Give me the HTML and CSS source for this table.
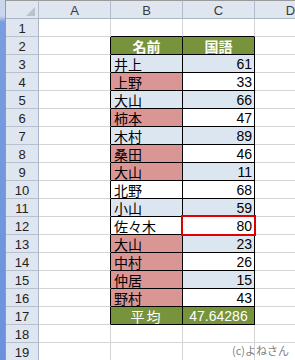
FILE: index.html
```html
<!DOCTYPE html>
<html lang="ja">
<head>
<meta charset="utf-8">
<link rel="stylesheet" href="styles.css">
</head>
<body>
<div class="app">
  <div class="strip"></div>
  <div class="sheet">
    <div class="c ch corner"></div><div class="c ch">A</div><div class="c ch">B</div><div class="c ch">C</div><div class="c ch">D</div>

    <div class="c rh">1</div><div class="c"></div><div class="c tt"></div><div class="c tt"></div><div class="c"></div>
    <div class="c rh">2</div><div class="c tl"></div><div class="c t g hd">名前</div><div class="c t g hd">国語</div><div class="c"></div>
    <div class="c rh">3</div><div class="c tl"></div><div class="c t nm b">井上</div><div class="c t num b">61</div><div class="c"></div>
    <div class="c rh">4</div><div class="c tl"></div><div class="c t nm p">上野</div><div class="c t num">33</div><div class="c"></div>
    <div class="c rh">5</div><div class="c tl"></div><div class="c t nm b">大山</div><div class="c t num b">66</div><div class="c"></div>
    <div class="c rh">6</div><div class="c tl"></div><div class="c t nm p">柿本</div><div class="c t num">47</div><div class="c"></div>
    <div class="c rh">7</div><div class="c tl"></div><div class="c t nm b">木村</div><div class="c t num b">89</div><div class="c"></div>
    <div class="c rh">8</div><div class="c tl"></div><div class="c t nm p">桑田</div><div class="c t num">46</div><div class="c"></div>
    <div class="c rh">9</div><div class="c tl"></div><div class="c t nm p">大山</div><div class="c t num b">11</div><div class="c"></div>
    <div class="c rh">10</div><div class="c tl"></div><div class="c t nm">北野</div><div class="c t num">68</div><div class="c"></div>
    <div class="c rh">11</div><div class="c tl"></div><div class="c t nm b">小山</div><div class="c t num b">59</div><div class="c"></div>
    <div class="c rh">12</div><div class="c tl"></div><div class="c t nm">佐々木</div><div class="c t num sel">80</div><div class="c"></div>
    <div class="c rh">13</div><div class="c tl"></div><div class="c t nm p">大山</div><div class="c t num b">23</div><div class="c"></div>
    <div class="c rh">14</div><div class="c tl"></div><div class="c t nm p">中村</div><div class="c t num">26</div><div class="c"></div>
    <div class="c rh">15</div><div class="c tl"></div><div class="c t nm p">仲居</div><div class="c t num b">15</div><div class="c"></div>
    <div class="c rh">16</div><div class="c tl"></div><div class="c t nm p">野村</div><div class="c t num">43</div><div class="c"></div>
    <div class="c rh">17</div><div class="c tl"></div><div class="c t g avg">平均</div><div class="c t g avgnum">47.64286</div><div class="c"></div>
    <div class="c rh">18</div><div class="c"></div><div class="c"></div><div class="c"></div><div class="c"></div>
    <div class="c rh">19</div><div class="c"></div><div class="c"></div><div class="c"></div><div class="c"></div>
  </div>
  <div class="credit">(c)よねさん</div>
</div>
</body>
</html>
```

FILE: styles.css
```css
html, body {
  margin: 0;
  padding: 0;
  background: #ffffff;
}
body {
  width: 295px;
  height: 360px;
  overflow: hidden;
}
.app {
  position: relative;
  display: flex;
  width: 295px;
  height: 360px;
  overflow: hidden;
}
.strip {
  flex: 0 0 5px;
  border-right: 1px solid #8d9cb4;
  background: linear-gradient(to bottom, #c9d6ec 0, #c9d6ec 16px, #7a9ddf 22px, #6a92dc 100%);
}
.sheet {
  flex: 0 0 auto;
  display: grid;
  grid-template-columns: 33px 72px 72px 72px 72px;
  grid-template-rows: 19px repeat(19, 18px);
  font-family: "Liberation Sans", "Noto Sans CJK JP", sans-serif;
  font-size: 13px;
  line-height: 15px;
  color: #000;
}
.c {
  box-sizing: border-box;
  border-right: 1px solid #d5d5d5;
  border-bottom: 1px solid #d5d5d5;
  display: flex;
  align-items: center;
  min-width: 0;
  overflow: visible;
  white-space: nowrap;
}
.ch {
  background: #dfe6ef;
  border-top: 1px solid #9a9a9a;
  border-right-color: #b0bccb;
  border-bottom-color: #a8b6c8;
  justify-content: center;
  color: #3a3a3a;
  font-size: 13px;
  padding-top: 1px;
}
.corner {
  position: relative;
}
.corner::after {
  content: "";
  position: absolute;
  right: 3px;
  bottom: 2px;
  width: 0;
  height: 0;
  border-left: 9px solid transparent;
  border-bottom: 9px solid #b9c3d0;
}
.rh {
  background: #dfe6ef;
  border-right-color: #a8b6c8;
  border-bottom-color: #b5c1d0;
  justify-content: center;
  color: #222;
  font-size: 13px;
  padding-top: 1px;
}
.tt {
  border-bottom-color: #000;
}
.tl {
  border-right-color: #000;
}
.t {
  border-right-color: #000;
  border-bottom-color: #000;
}
.nm {
  font-family: "Noto Sans CJK JP", sans-serif;
  font-size: 14px;
  padding-left: 3px;
  padding-top: 1px;
}
.num {
  justify-content: flex-end;
  font-family: "Liberation Sans", sans-serif;
  font-size: 14px;
  padding-right: 2px;
  padding-top: 2px;
}
.b {
  background: #dce6f1;
}
.p {
  background: #da9694;
}
.g {
  background: #77933c;
  color: #fff;
  justify-content: center;
}
.hd {
  font-family: "Noto Sans CJK JP", sans-serif;
  font-weight: 700;
  font-size: 14px;
  padding-top: 1px;
}
.avg {
  font-family: "Noto Sans CJK JP", sans-serif;
  font-size: 14px;
  padding-top: 1px;
  letter-spacing: 2px;
}
.avgnum {
  font-family: "Liberation Sans", sans-serif;
  font-size: 14px;
  padding-top: 2px;
}
.sel {
  position: relative;
}
.sel::after {
  content: "";
  position: absolute;
  top: -2px;
  left: -2px;
  right: -2px;
  bottom: -2px;
  border: 2px solid #e00000;
}
.credit {
  position: absolute;
  left: 232px;
  top: 343px;
  font-family: "Noto Sans CJK JP", sans-serif;
  font-size: 11px;
  line-height: 14px;
  color: #7f7f7f;
  white-space: nowrap;
}
```
